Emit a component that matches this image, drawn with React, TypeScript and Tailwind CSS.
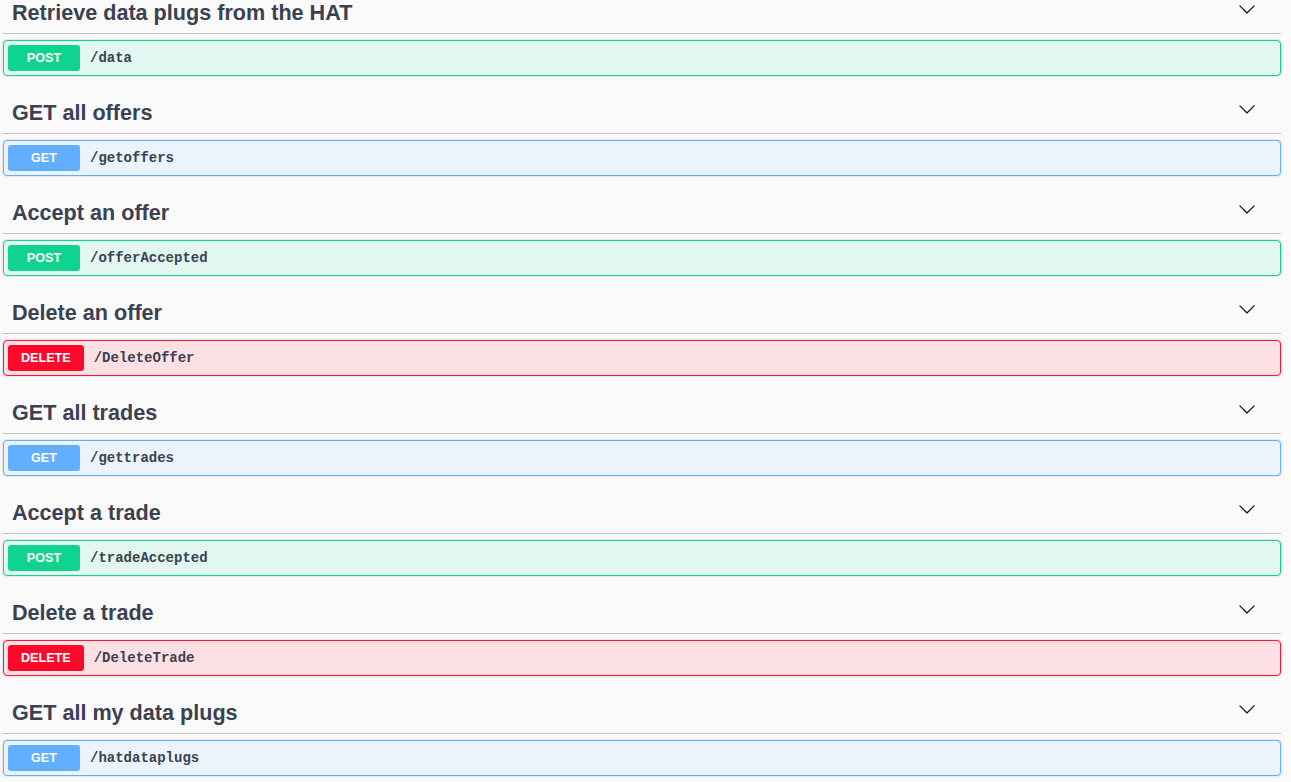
import React from "react";

type Method = "POST" | "GET" | "DELETE";

type Operation = {
  tag: string;
  method: Method;
  path: string;
};

const operations: Operation[] = [
  { tag: "Retrieve data plugs from the HAT", method: "POST", path: "/data" },
  { tag: "GET all offers", method: "GET", path: "/getoffers" },
  { tag: "Accept an offer", method: "POST", path: "/offerAccepted" },
  { tag: "Delete an offer", method: "DELETE", path: "/DeleteOffer" },
  { tag: "GET all trades", method: "GET", path: "/gettrades" },
  { tag: "Accept a trade", method: "POST", path: "/tradeAccepted" },
  { tag: "Delete a trade", method: "DELETE", path: "/DeleteTrade" },
  { tag: "GET all my data plugs", method: "GET", path: "/hatdataplugs" },
];

const blockStyles: Record<Method, { block: string; badge: string }> = {
  POST: {
    block: "border-[#10d38f] bg-[#e2f7ef]",
    badge: "bg-[#10d38f]",
  },
  GET: {
    block: "border-[#61affe] bg-[#ebf3fc]",
    badge: "bg-[#61affe]",
  },
  DELETE: {
    block: "border-[#fb1537] bg-[#fde0e4]",
    badge: "bg-[#fc0a2a]",
  },
};

function Chevron() {
  return (
    <svg width="18" height="18" viewBox="0 0 20 20" className="-mt-[1px] fill-[#111]">
      <path d="M17.418 6.109c.272-.268.709-.268.979 0s.271.701 0 .969l-7.908 7.83c-.27.268-.707.268-.979 0l-7.908-7.83c-.27-.268-.27-.701 0-.969.271-.268.709-.268.979 0L10 13.25l7.418-7.141z" />
    </svg>
  );
}

function TagSection({ op }: { op: Operation }) {
  const styles = blockStyles[op.method];
  return (
    <section className="mb-[14px]">
      {/* tag header */}
      <div className="flex h-[44px] items-start border-b border-[#3b4151]/30 pl-[9px] pr-[25px] pt-[11px]">
        <h4 className="flex h-[25px] flex-1 items-center text-[21.6px] font-bold text-[#3b4151]">
          {op.tag}
        </h4>
        <Chevron />
      </div>

      {/* operation block */}
      <div
        className={`mt-[6px] flex items-center rounded-[4px] border p-[4px] shadow-[0_0_3px_rgba(0,0,0,0.19)] ${styles.block}`}
      >
        <span
          className={`flex h-[26px] min-w-[72px] items-center justify-center rounded-[3px] px-[13px] text-[12.6px] font-bold text-white ${styles.badge}`}
        >
          {op.method}
        </span>
        <span className="px-[10px] font-['Liberation_Mono',monospace] text-[14px] font-bold text-[#3b4151]">
          {op.path}
        </span>
      </div>
    </section>
  );
}

export default function App() {
  return (
    <div className="h-[782px] overflow-hidden bg-[#fafafa] font-['Liberation_Sans',Arial,sans-serif]">
      <div className="-mt-[10px] pl-[3px] pr-[10px]">
        {operations.map((op) => (
          <TagSection key={op.path} op={op} />
        ))}
      </div>
    </div>
  );
}
